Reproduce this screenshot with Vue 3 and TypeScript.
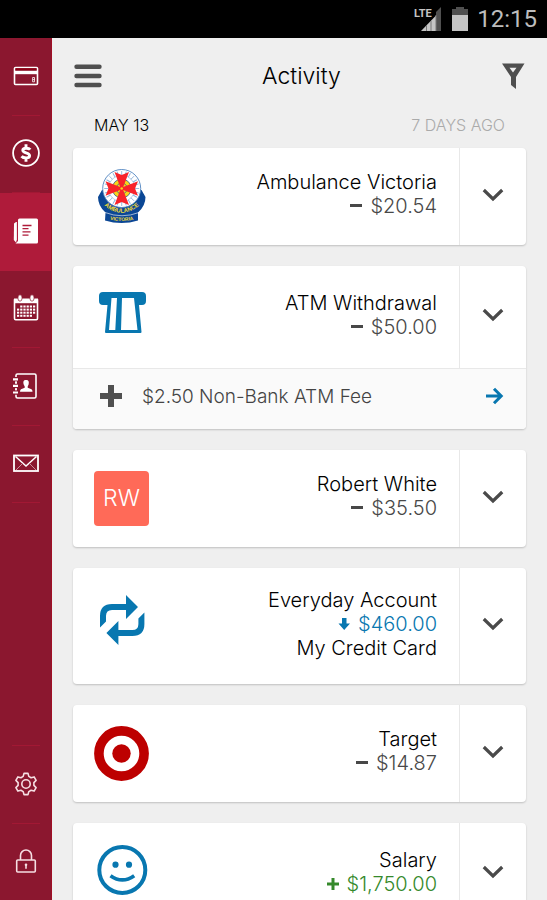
<script setup lang="ts">
type Sign = 'minus' | 'plus' | 'down'
type Logo = 'ambulance' | 'atm' | 'person' | 'transfer' | 'target' | 'smile'

interface Activity {
  logo: Logo
  title: string
  amount: string
  sign: Sign
  note?: string
  fee?: string
}

const activities: Activity[] = [
  { logo: 'ambulance', title: 'Ambulance Victoria', amount: '$20.54', sign: 'minus' },
  { logo: 'atm', title: 'ATM Withdrawal', amount: '$50.00', sign: 'minus', fee: '$2.50 Non-Bank ATM Fee' },
  { logo: 'person', title: 'Robert White', amount: '$35.50', sign: 'minus' },
  { logo: 'transfer', title: 'Everyday Account', amount: '$460.00', sign: 'down', note: 'My Credit Card' },
  { logo: 'target', title: 'Target', amount: '$14.87', sign: 'minus' },
  { logo: 'smile', title: 'Salary', amount: '$1,750.00', sign: 'plus' },
]

const calendarDots: { x: number; y: number }[] = []
for (let row = 0; row < 4; row++) {
  for (let col = 0; col < 6; col++) {
    if ((row === 0 && col === 0) || (row === 3 && col === 5)) continue
    calendarDots.push({ x: 5 + col * 3.2, y: 11.5 + row * 3.1 })
  }
}
const dialTicks = Array.from({ length: 24 }, (_, i) => i * 15)
</script>

<template>
  <div class="app">
    <header class="status">
      <svg class="signal" width="30" height="28" viewBox="0 0 30 28" aria-hidden="true">
        <path d="M7 26 22 10.500V26Z" fill="#c4c4c4" />
        <path d="M22 26V7L27 2V26Z" fill="#505050" />
        <path d="M12.500 20V26M17 16V26M22 10V26" stroke="#777" stroke-width="1" />
        <text x="0" y="12" class="lte">LTE</text>
      </svg>
      <svg width="16" height="24" viewBox="0 0 16 24" aria-hidden="true">
        <path d="M4 0h8v2h4v7H0V2h4Z" fill="#505050" />
        <path d="M0 8h16v16H0Z" fill="#c4c4c4" />
      </svg>
      <time>12:15</time>
    </header>

    <div class="body">
      <nav class="rail" aria-label="Main">
        <div class="rail-main">
          <a href="#cards" aria-label="Cards">
            <svg width="28" height="28" viewBox="0 0 28 28">
              <rect x="2.500" y="5.500" width="23" height="17" rx="1" fill="#8b172f" stroke="#fff" stroke-width="1.600" />
              <path d="M3.500 7.300h21" stroke="#8b0014" stroke-width="2.200" />
              <path d="M3 10.500h22" stroke="#fff" stroke-width="3.400" />
              <path d="M20.600 15.500h1.900v4.300h-1.900ZM20.600 17.600h1.900" fill="none" stroke="#fff" stroke-width=".8" />
            </svg>
          </a>
          <a href="#pay" aria-label="Payments">
            <svg width="28" height="28" viewBox="0 0 28 28">
              <circle cx="14" cy="14" r="12.900" fill="none" stroke="#fff" stroke-width="1.800" />
              <path d="M18.200 10.600C17 8.900 10.800 8.300 10.800 11.300C10.800 14.400 17.600 13.200 17.600 16.700C17.600 19.700 11.300 19.300 9.500 17.200M14 5.300V9M14 19V22.700" fill="none" stroke="#fff" stroke-width="2.900" />
            </svg>
          </a>
          <a href="#activity" class="active" aria-label="Activity" aria-current="page">
            <svg width="28" height="28" viewBox="0 0 28 28">
              <path d="M2 6.500 4 5H4.900V22.500L4 25.500 1.800 23Z" fill="#fff" />
              <path d="M7.500 1.500H24.500Q26 1.500 26 3V25Q26 26.500 24.500 26.500H3.500L6 24V3Q6 1.500 7.500 1.500Z" fill="#fff" />
              <path d="M10.500 8.500h9M10.500 11.700h6M10.500 14.900h8M10.500 18.100h6" stroke="#af1b3a" stroke-width="1.300" />
            </svg>
          </a>
          <a href="#calendar" aria-label="Calendar">
            <svg width="28" height="28" viewBox="0 0 28 28">
              <path d="M2.500 6H25.500V24.500Q25.500 25.700 24.300 25.700H3.700Q2.500 25.700 2.500 24.500Z" fill="none" stroke="#fff" stroke-width="1.600" />
              <path d="M2 4.500h24v4.700H2Z" fill="#fff" />
              <ellipse cx="8" cy="4" rx="2.100" ry="3.200" fill="#fff" stroke="#8b172f" stroke-width=".7" />
              <ellipse cx="20" cy="4" rx="2.100" ry="3.200" fill="#fff" stroke="#8b172f" stroke-width=".7" />
              <rect v-for="(d, i) in calendarDots" :key="i" :x="d.x" :y="d.y" width="2.200" height="2" fill="#fff" />
            </svg>
          </a>
          <a href="#contacts" aria-label="Contacts">
            <svg width="28" height="28" viewBox="0 0 28 28">
              <rect x="4" y="2" width="20" height="24" rx="1.500" fill="none" stroke="#fff" stroke-width="1.600" />
              <path d="M1.500 7.300h4M1.500 13.900h4M1.500 20.500h4" stroke="#8b172f" stroke-width="4.500" />
              <path d="M1 7.300h5M1 13.900h5M1 20.500h5" stroke="#fff" stroke-width="2.200" />
              <path d="M4 10.600v0.100M4 9.600v2M4 16.200v2" stroke="#fff" stroke-width="1.500" />
              <path d="M14 8C11.300 8 11 10 11.700 12.500L12.700 14.500V15.800L9 17.300Q8 18 8 19.800H20.500Q20.500 18 19.500 17.300L15.700 15.800V14.500L16.600 12.500C17.200 10 16.800 8 14 8Z" fill="#fff" />
            </svg>
          </a>
          <a href="#messages" aria-label="Messages">
            <svg width="28" height="28" viewBox="0 0 28 28">
              <rect x="2" y="6.500" width="24" height="15.500" fill="none" stroke="#fff" stroke-width="1.800" />
              <path d="M3.500 7.500 14 17 24.500 7.500" fill="none" stroke="#fff" stroke-width="1.500" />
              <path d="M4 21 10.500 14.500M24 21 17.500 14.500" stroke="#c98d99" stroke-width="1" />
            </svg>
          </a>
        </div>
        <div class="rail-foot">
          <a href="#settings" aria-label="Settings">
            <svg width="28" height="28" viewBox="0 0 28 28" fill="none" stroke="#f6dfe3" stroke-width="1.600" stroke-linejoin="round">
              <path d="M12 3.400h4l.8 3 2.300 1.300 3-.8 2 3.500-2.200 2.200v2.800l2.200 2.200-2 3.500-3-.8-2.300 1.300-.8 3h-4l-.8-3-2.300-1.300-3 .8-2-3.500 2.200-2.200v-2.800l-2.200-2.200 2-3.500 3 .8 2.300-1.300Z" />
              <circle cx="14" cy="14" r="4.200" />
            </svg>
          </a>
          <a href="#lock" aria-label="Lock">
            <svg width="28" height="28" viewBox="0 0 28 28" fill="none" stroke="#f6dfe3" stroke-width="1.600">
              <rect x="4.700" y="13" width="18.600" height="12" rx="1" />
              <path d="M8.500 13V8.500a5.500 5.500 0 0 1 11 0V13" />
              <circle cx="14" cy="17.700" r="1.300" fill="#f6dfe3" stroke="none" />
              <path d="M14 18v3.800" />
            </svg>
          </a>
        </div>
      </nav>

      <main>
        <div class="bar">
          <button type="button" aria-label="Menu">
            <svg width="28" height="24" viewBox="0 0 28 24"><path d="M2.500 2.800h23M2.500 12h23M2.500 21h23" stroke="#4f4f4f" stroke-width="4.400" stroke-linecap="round" /></svg>
          </button>
          <h1>Activity</h1>
          <button type="button" aria-label="Filter">
            <svg width="24" height="26" viewBox="0 0 24 26">
              <path fill-rule="evenodd" d="M1 0.500H23.500L15 14V26L10 22V14ZM8.500 4.800 12 9.500 15.500 4.800Z" fill="#4f4f4f" />
            </svg>
          </button>
        </div>

        <div class="date"><h2>MAY 13</h2><span>7 DAYS AGO</span></div>

        <ul class="list">
          <li v-for="a in activities" :key="a.title" class="card">
            <div class="row" :class="`row-${a.logo}`">
              <div class="logo">
                <div v-if="a.logo === 'person'" class="initials">RW</div>
                <svg v-else-if="a.logo === 'ambulance'" width="55" height="55" viewBox="0 0 55 55" aria-hidden="true">
                  <path d="M8 21 4 28Q4 37 11.500 43.500L11 51.500Q27.500 56.500 44 51.500L44 43.500Q51.500 37 51.500 28L47.500 21Z" fill="#0b4795" />
                  <path d="M11 43.500Q28 50 45 43.500" fill="none" stroke="#fff" stroke-width=".6" />
                  <circle cx="27.700" cy="19.500" r="19" fill="#fff" stroke="#4f83c0" stroke-width=".9" />
                  <g stroke="#8fb2da" stroke-width=".9">
                    <path v-for="t in dialTicks" :key="t" d="M27.700 2V6.500" :transform="`rotate(${t} 27.700 19.500)`" />
                  </g>
                  <circle cx="27.700" cy="19.500" r="13.300" fill="none" stroke="#9bbbe0" stroke-width=".7" />
                  <circle cx="27.700" cy="19.500" r="9.500" fill="#f6d41b" stroke="#31589a" stroke-width=".8" />
                  <circle cx="27.700" cy="19.500" r="5.500" fill="none" stroke="#31589a" stroke-width=".8" />
                  <path d="M20.500 3 27.700 6 35 3 29.200 18 44 12.300 41 19.500 44 26.700 29.200 21 35 36 27.700 33 20.500 36 26.200 21 11.500 26.700 14.500 19.500 11.500 12.300 26.200 18Z" fill="#f8222a" />
                  <circle cx="27.700" cy="19.500" r="1.300" fill="#f6d41b" />
                  <path id="arc-name" d="M8 34.500Q27.700 53 47.500 34.500" fill="none" />
                  <path id="arc-state" d="M11 49.500Q27.700 54.500 44.500 49.500" fill="none" />
                  <text class="badge-name"><textPath href="#arc-name" startOffset="50%">AMBULANCE</textPath></text>
                  <text class="badge-state"><textPath href="#arc-state" startOffset="50%">VICTORIA</textPath></text>
                </svg>
                <svg v-else-if="a.logo === 'atm'" width="55" height="55" viewBox="0 0 55 55" aria-hidden="true">
                  <path d="M9 5H48Q52 5 52 9V14Q52 18 48 18H45L47.500 45Q47.500 46 46.500 46H12Q11 46 11 45L13.500 18H9Q5 18 5 14V9Q5 5 9 5Z" fill="#0877b0" />
                  <path d="M17.500 11H23L21.300 43H15ZM28 11H40L43.500 43H27Z" fill="#fff" />
                </svg>
                <svg v-else-if="a.logo === 'transfer'" width="55" height="60" viewBox="0 0 55 60" aria-hidden="true">
                  <g fill="#0877b0">
                    <path d="M6 38.500 12 32.500V27Q12 21 18 21H32V30L44 18 32 6V15H18Q6 15 6 27Z" />
                    <path d="M6 38.500 12 32.500V27Q12 21 18 21H32V30L44 18 32 6V15H18Q6 15 6 27Z" transform="rotate(180 28.200 31)" />
                  </g>
                </svg>
                <svg v-else-if="a.logo === 'target'" width="55" height="55" viewBox="0 0 55 55" aria-hidden="true">
                  <circle cx="27.500" cy="27.500" r="22.600" fill="#fff" stroke="#bd0000" stroke-width="9.600" />
                  <circle cx="27.500" cy="27.500" r="9.200" fill="#bd0000" />
                </svg>
                <svg v-else width="55" height="55" viewBox="0 0 55 55" aria-hidden="true">
                  <circle cx="28.300" cy="26" r="23" fill="none" stroke="#0877b0" stroke-width="4" />
                  <circle cx="21.500" cy="20.700" r="3.100" fill="#0877b0" />
                  <circle cx="35" cy="20.700" r="3.100" fill="#0877b0" />
                  <path d="M16.500 31.700Q28.300 40.200 40.200 31.700" fill="none" stroke="#0877b0" stroke-width="3.600" />
                </svg>
              </div>
              <div class="text">
                <h3>{{ a.title }}</h3>
                <p :class="a.sign">
                  <svg v-if="a.sign === 'minus'" width="14" height="14" viewBox="0 0 14 14" role="img" aria-label="minus"><path d="M1 6.500h12" stroke="currentColor" stroke-width="3" /></svg>
                  <svg v-else-if="a.sign === 'plus'" width="14" height="14" viewBox="0 0 14 14" role="img" aria-label="plus"><path d="M1 7h12M7 1v12" stroke="currentColor" stroke-width="3" /></svg>
                  <svg v-else width="14" height="14" viewBox="0 0 14 14" role="img" aria-label="transfer to"><path d="M5 1h4.500v5.500H13L7.200 13 1.500 6.500H5Z" fill="currentColor" /></svg>
                  {{ a.amount }}
                </p>
                <h3 v-if="a.note">{{ a.note }}</h3>
              </div>
              <button type="button" class="toggle" :aria-label="`Show details of ${a.title}`">
                <svg width="22" height="14" viewBox="0 0 22 14"><path d="M1.800 2 11 11 20.200 2" fill="none" stroke="#4a4a4a" stroke-width="3.200" /></svg>
              </button>
            </div>
            <a v-if="a.fee" href="#fee" class="fee">
              <svg width="22" height="22" viewBox="0 0 22 22" aria-hidden="true"><path d="M0 11h22M11 0v22" stroke="#505050" stroke-width="6" /></svg>
              <span>{{ a.fee }}</span>
              <svg width="18" height="18" viewBox="0 0 18 18" aria-hidden="true"><path d="M0 9h15M8 1.800 15.200 9 8 16.200" fill="none" stroke="#0877b0" stroke-width="3" /></svg>
            </a>
          </li>
        </ul>
      </main>
    </div>
  </div>
</template>

<style>
body {
  background: #efefef;
}
</style>

<style scoped>
.app {
  display: flex;
  flex-direction: column;
  height: 100vh;
  overflow: hidden;
  color: #000;
  background: #efefef;
  font-family: Inter, "Liberation Sans", sans-serif;
  font-weight: 300;
}
h1, h2, h3, p, ul {
  margin: 0;
  padding: 0;
  font-weight: 300;
}
svg {
  display: block;
  flex: none;
}
button {
  display: flex;
  padding: 0;
  border: 0;
  background: none;
  cursor: pointer;
}

.status {
  display: flex;
  flex: none;
  align-items: center;
  justify-content: flex-end;
  height: 38px;
  padding-right: 10px;
  box-sizing: border-box;
  background: #000;
  color: #bdbdbd;
  font-family: Roboto, sans-serif;
  font-size: 24px;
  font-weight: 400;
}
.signal {
  margin-right: 8px;
}
.status time {
  margin-left: 9px;
}
.lte {
  fill: #c4c4c4;
  stroke: #000;
  stroke-width: 1px;
  paint-order: stroke;
  font: 700 11px Roboto, sans-serif;
}

.body {
  display: flex;
  flex: 1;
  min-height: 0;
}
.rail {
  display: flex;
  flex: none;
  flex-direction: column;
  justify-content: space-between;
  width: 52px;
  box-sizing: border-box;
  border-right: 1px solid #a00f24;
  background: #8b172f;
}
.rail-main,
.rail-foot {
  display: grid;
  grid-auto-rows: 1fr;
}
.rail-main {
  height: 465px;
}
.rail-foot {
  height: 155px;
}
.rail a {
  display: grid;
  place-items: center;
  padding-bottom: 2px;
  background: linear-gradient(#a21834, #a21834) center bottom / 28px 1px no-repeat;
}
.rail .rail-foot a {
  padding-bottom: 0;
  background-position: center top;
}
.rail a.active {
  background: #af1b3a;
}

main {
  display: flex;
  flex: 1;
  flex-direction: column;
  min-width: 0;
  padding: 0 21px;
  overflow: hidden;
}
.bar {
  display: grid;
  flex: none;
  grid-template-columns: 28px 1fr 24px;
  align-items: center;
  height: 76px;
  padding: 0 1px;
}
.bar h1 {
  text-align: center;
  font-size: 23px;
  line-height: 28px;
}
.date {
  display: flex;
  flex: none;
  justify-content: space-between;
  align-items: center;
  height: 34px;
  padding: 0 21px 12px;
  box-sizing: border-box;
  font-size: 16px;
  line-height: 22px;
}
.date h2 {
  font-size: 16px;
}
.date span {
  color: #aaa;
}

.list {
  display: flex;
  flex-direction: column;
  gap: 21px;
  list-style: none;
}
.card {
  flex: none;
  border-radius: 4px;
  background: #fff;
  box-shadow: 0 1px 2px rgba(0, 0, 0, 0.2);
  overflow: hidden;
}
.row {
  display: flex;
  min-height: 97px;
}
.row-atm,
.row-smile {
  min-height: 102px;
}
.row-transfer {
  min-height: 116px;
}
.logo {
  flex: none;
  padding: 21px 0 0 21px;
}
.initials {
  width: 55px;
  border-radius: 4px;
  background: #ff6a58;
  color: #fff;
  font-size: 23px;
  line-height: 55px;
  text-align: center;
}
.text {
  display: flex;
  flex: 1;
  flex-direction: column;
  justify-content: center;
  padding: 0 22px 5px 8px;
  text-align: right;
  font-size: 20px;
  line-height: 24px;
}
.text h3 {
  font-size: 20px;
}
.text p {
  display: flex;
  align-items: center;
  justify-content: flex-end;
  gap: 7px;
  color: #484848;
}
.text p.down {
  color: #0877b0;
}
.text p.plus {
  color: #35892b;
}
.toggle {
  align-items: center;
  justify-content: center;
  width: 67px;
  padding-bottom: 4px;
  border-left: 1px solid #e8e8e8;
}
.fee {
  display: flex;
  align-items: center;
  gap: 20px;
  height: 61px;
  padding: 0 22px 6px 27px;
  box-sizing: border-box;
  border-top: 1px solid #e8e8e8;
  background: #fafafa;
  color: #444;
  font-size: 19px;
  text-decoration: none;
}
.fee span {
  flex: 1;
}
.badge-name,
.badge-state {
  fill: #f3dc35;
  font-family: "Liberation Sans", sans-serif;
  font-weight: 700;
  text-anchor: middle;
}
.badge-name {
  font-size: 6px;
}
.badge-state {
  font-size: 5px;
}
</style>
